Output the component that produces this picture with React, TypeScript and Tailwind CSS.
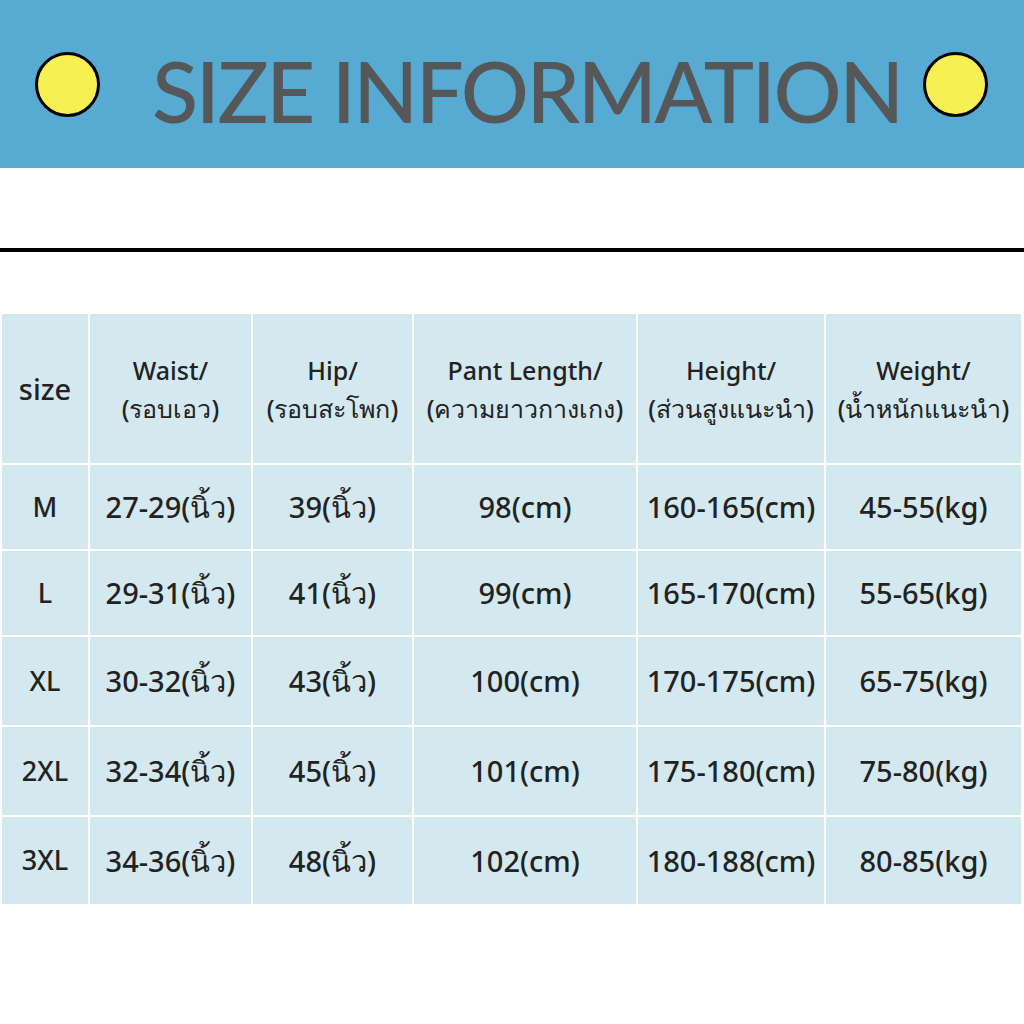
const header = [
  { en: 'Waist/', th: '(รอบเอว)' },
  { en: 'Hip/', th: '(รอบสะโพก)' },
  { en: 'Pant Length/', th: '(ความยาวกางเกง)' },
  { en: 'Height/', th: '(ส่วนสูงแนะนำ)' },
  { en: 'Weight/', th: '(น้ำหนักแนะนำ)' },
]

const rows = [
  { size: 'M', h: 'h-[84px]', cells: ['27-29(นิ้ว)', '39(นิ้ว)', '98(cm)', '160-165(cm)', '45-55(kg)'] },
  { size: 'L', h: 'h-[84px]', cells: ['29-31(นิ้ว)', '41(นิ้ว)', '99(cm)', '165-170(cm)', '55-65(kg)'] },
  { size: 'XL', h: 'h-[88px]', cells: ['30-32(นิ้ว)', '43(นิ้ว)', '100(cm)', '170-175(cm)', '65-75(kg)'] },
  { size: '2XL', h: 'h-[88px]', cells: ['32-34(นิ้ว)', '45(นิ้ว)', '101(cm)', '175-180(cm)', '75-80(kg)'] },
  { size: '3XL', h: 'h-[87px]', cells: ['34-36(นิ้ว)', '48(นิ้ว)', '102(cm)', '180-188(cm)', '80-85(kg)'] },
]

function Dot() {
  return <div className="w-[65px] h-[65px] rounded-full bg-[#f7f052] border-[3px] border-black shrink-0" />
}

export default function App() {
  return (
    <div className="w-[1024px] h-[1024px] bg-white overflow-hidden font-['Noto_Sans','Open_Sans',sans-serif]">
      {/* Title band */}
      <div className="h-[168px] bg-[#57abd3] flex items-center pl-[35px] pr-[36px]">
        <Dot />
        <h1 className="ml-[52px] whitespace-nowrap text-[85px] leading-none font-['Lato','Open_Sans',sans-serif] font-medium text-[#555759] tracking-[-2.5px] mt-[12px]">
          SIZE INFORMATION
        </h1>
        <div className="ml-auto">
          <Dot />
        </div>
      </div>

      <div className="h-[80px]" />
      <div className="h-[4px] bg-black" />
      <div className="h-[62px]" />

      {/* Size table */}
      <div className="ml-[2px] w-[1019px] grid grid-cols-[86px_161px_159px_222px_186px_195px] gap-[2px] bg-white text-[#222] font-medium">
        <div className="h-[149px] bg-[#d3e8ef] flex items-center justify-center text-[29px]">size</div>
        {header.map((h) => (
          <div key={h.en} className="h-[149px] bg-[#d3e8ef] flex flex-col items-center justify-center text-[25px] leading-[38px] whitespace-nowrap">
            <span>{h.en}</span>
            <span>{h.th}</span>
          </div>
        ))}
        {rows.map((r) => (
          <>
            <div key={r.size} className={`${r.h} bg-[#d3e8ef] flex items-center justify-center text-[27px]`}>{r.size}</div>
            {r.cells.map((c, i) => (
              <div key={r.size + i} className={`${r.h} bg-[#d3e8ef] flex items-center justify-center text-[29px]`}>{c}</div>
            ))}
          </>
        ))}
      </div>
    </div>
  )
}
